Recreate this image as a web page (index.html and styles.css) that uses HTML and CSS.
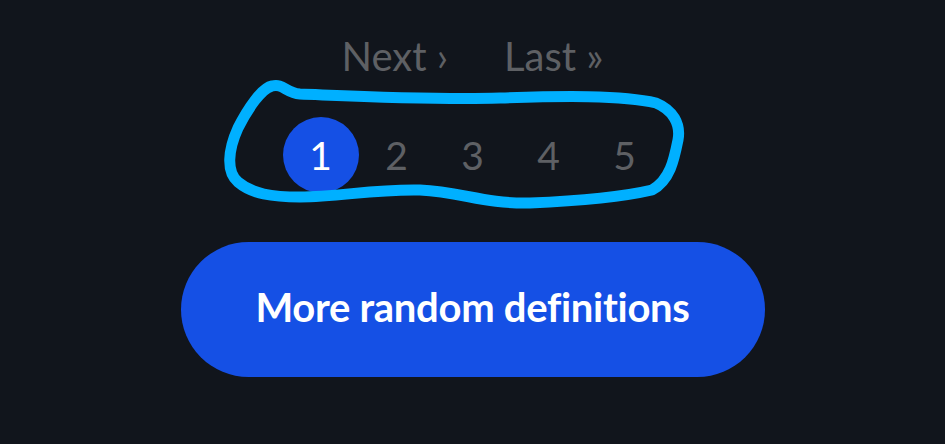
FILE: index.html
```html
<!DOCTYPE html>
<html lang="en">
<head>
<meta charset="utf-8">
<title>Pagination</title>
<link rel="stylesheet" href="styles.css">
</head>
<body>
<main class="page">
  <nav class="nav-links">
    <a class="nav-link" href="#">Next ›</a>
    <a class="nav-link" href="#">Last »</a>
  </nav>
  <ol class="pages">
    <li class="page-item current">1</li>
    <li class="page-item">2</li>
    <li class="page-item">3</li>
    <li class="page-item">4</li>
    <li class="page-item">5</li>
  </ol>
  <button class="more-btn" type="button">More random definitions</button>
  <svg class="scribble" width="945" height="444" viewBox="0 0 945 444" aria-hidden="true">
    <path d="M 272 86 C 262 88, 248 108, 238 128 C 228 150, 226 172, 238 182 C 252 194, 272 197, 300 197 C 340 197, 372 189, 420 190 C 462 192, 484 204, 530 203 C 580 201, 622 197, 652 190 C 670 180, 674 160, 678 140 C 681 124, 673 110, 656 103 C 622 95, 562 96, 500 98 C 432 100, 352 96, 300 94 C 286 93, 283 83, 272 86" />
  </svg>
</main>
</body>
</html>
```

FILE: styles.css
```css
html, body {
  margin: 0;
  padding: 0;
}
body {
  background: #11151c;
  width: 945px;
  height: 444px;
  overflow: hidden;
  font-family: Lato, "Liberation Sans", sans-serif;
}
.page {
  position: relative;
  width: 945px;
  height: 444px;
  display: flex;
  flex-direction: column;
  align-items: center;
  padding-top: 32px;
  box-sizing: border-box;
}
.nav-links {
  display: flex;
  gap: 56px;
  height: 48px;
  align-items: center;
}
.nav-link {
  color: #5e6064;
  text-decoration: none;
  font-size: 40px;
  line-height: 48px;
}
.pages {
  list-style: none;
  margin: 37px 0 0;
  padding: 0;
  display: flex;
}
.page-item {
  width: 76px;
  height: 76px;
  border-radius: 50%;
  display: flex;
  align-items: center;
  justify-content: center;
  color: #5e6064;
  font-size: 39px;
}
.page-item.current {
  background: #1550e5;
  color: #ffffff;
}
.more-btn {
  margin-top: 49px;
  width: 584px;
  height: 135px;
  padding: 0 0 6px;
  border: none;
  border-radius: 68px;
  background: #1550e5;
  color: #ffffff;
  font-family: Lato, "Liberation Sans", sans-serif;
  font-weight: 700;
  font-size: 40px;
  font-variant-ligatures: none;
  letter-spacing: -0.3px;
}
.scribble {
  position: absolute;
  left: 0;
  top: 0;
  pointer-events: none;
}
.scribble path {
  fill: none;
  stroke: #00b0ff;
  stroke-width: 11;
  stroke-linecap: round;
  stroke-linejoin: round;
}
```
